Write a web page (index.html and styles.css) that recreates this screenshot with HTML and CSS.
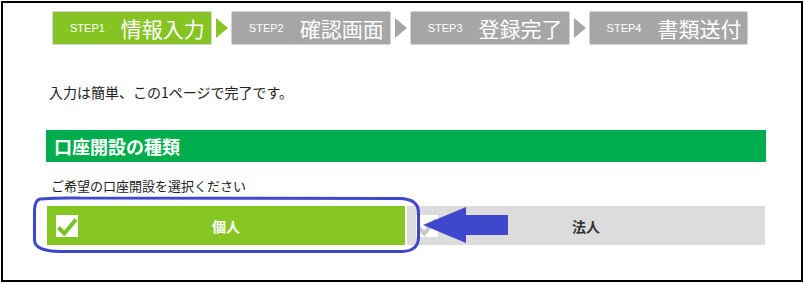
FILE: index.html
```html
<!DOCTYPE html>
<html lang="ja">
<head>
<meta charset="utf-8">
<title>口座開設</title>
<link rel="stylesheet" href="styles.css">
</head>
<body>
<div class="frame">
  <ol class="steps">
    <li class="step step-active"><span class="step-no">STEP1</span><span class="step-name">情報入力</span></li>
    <li class="step-arrow step-arrow-active"></li>
    <li class="step"><span class="step-no">STEP2</span><span class="step-name">確認画面</span></li>
    <li class="step-arrow"></li>
    <li class="step"><span class="step-no">STEP3</span><span class="step-name">登録完了</span></li>
    <li class="step-arrow"></li>
    <li class="step"><span class="step-no">STEP4</span><span class="step-name">書類送付</span></li>
  </ol>
  <div class="content">
    <p class="intro">入力は簡単、この1ページで完了です。</p>
    <h2 class="section-title">口座開設の種類</h2>
    <p class="prompt">ご希望の口座開設を選択ください</p>
    <div class="choices">
      <div class="choice choice-selected">
        <span class="checkbox">
          <svg viewBox="0 0 22 22" width="22" height="22"><path d="M2.5 12.5 L8.3 18.5 L20 4.5" fill="none" stroke="#7cbf2a" stroke-width="4"/></svg>
        </span>
        <span class="choice-label">個人</span>
        <span class="spacer"></span>
      </div>
      <div class="choice">
        <span class="checkbox">
          <svg viewBox="0 0 22 22" width="22" height="22"><path d="M2.5 12.5 L8.3 18.5 L20 4.5" fill="none" stroke="#c8c8c8" stroke-width="4"/></svg>
        </span>
        <span class="choice-label">法人</span>
        <span class="spacer"></span>
      </div>
    </div>
  </div>
</div>
<svg class="annotation" width="804" height="284" viewBox="0 0 804 284">
  <path d="M40 199 Q60 197.5 80 198 L400 198.5 Q418 199 418.5 212 L418.5 238 Q418 251 402 251.5 L60 251.5 Q34.5 251 34.5 240 L34.5 210 Q35 200 40 199 Z" fill="none" stroke="#3f48cc" stroke-width="3"/>
  <polygon points="423,225 466,207 466,215 508,215 508,235 466,235 466,243" fill="#3f48cc"/>
</svg>
</body>
</html>
```
FILE: styles.css
```css
* { box-sizing: border-box; }

body {
  margin: 0;
  background: #fff;
  font-family: "Noto Sans CJK JP", "Noto Sans", sans-serif;
  color: #333;
  position: relative;
}

.frame {
  margin: 1px;
  width: 802px;
  height: 281px;
  border: 2px solid #000;
  overflow: hidden;
}

.steps {
  list-style: none;
  margin: 8px 0 0 49px;
  padding: 0;
  display: flex;
  align-items: center;
  height: 34px;
}

.step {
  height: 34px;
  display: flex;
  align-items: center;
  padding: 0 6px 0 17px;
  background: #a6a6a6;
  border: 1px solid #d2d2d2;
  border-radius: 2px;
  color: #fff;
}

.step-active {
  background: #86c424;
}

.step-no {
  font-family: "Liberation Sans", Arial, sans-serif;
  font-size: 11px;
  margin-right: 16px;
}

.step-name {
  font-size: 21px;
  line-height: 1;
}

.step-arrow {
  width: 0;
  height: 0;
  margin: 0 3px 0 4px;
  border-top: 10px solid transparent;
  border-bottom: 10px solid transparent;
  border-left: 12px solid #a6a6a6;
}

.step-arrow-active {
  border-left-color: #86c424;
}

.content {
  margin-left: 43px;
  width: 720px;
}

.intro {
  margin: 37px 0 0;
  padding-left: 3px;
  font-size: 14px;
  line-height: 20px;
  color: #222;
}

.section-title {
  margin: 28px 0 0;
  height: 32px;
  padding-left: 8px;
  background: #00ad4c;
  color: #fff;
  font-size: 18px;
  font-weight: bold;
  line-height: 32px;
}

.prompt {
  margin: 15px 0 0;
  padding-left: 5px;
  font-size: 13px;
  line-height: 18px;
  color: #222;
}

.choices {
  margin-top: 10px;
  display: grid;
  grid-template-columns: 1fr 1fr;
}

.choice {
  height: 41px;
  border: 1px solid #fff;
  background: #dcdcdc;
  display: grid;
  grid-template-columns: 22px 1fr 22px;
  align-items: center;
  padding: 0 9px;
}

.choice-selected {
  background: #86c622;
}

.checkbox {
  width: 22px;
  height: 22px;
  background: #fff;
  display: block;
}

.checkbox svg { display: block; }

.choice-label {
  text-align: center;
  font-size: 14px;
  font-weight: bold;
  color: #333;
}

.choice-selected .choice-label {
  color: #fff;
}

.annotation {
  position: absolute;
  top: 0;
  left: 0;
  pointer-events: none;
}
```
